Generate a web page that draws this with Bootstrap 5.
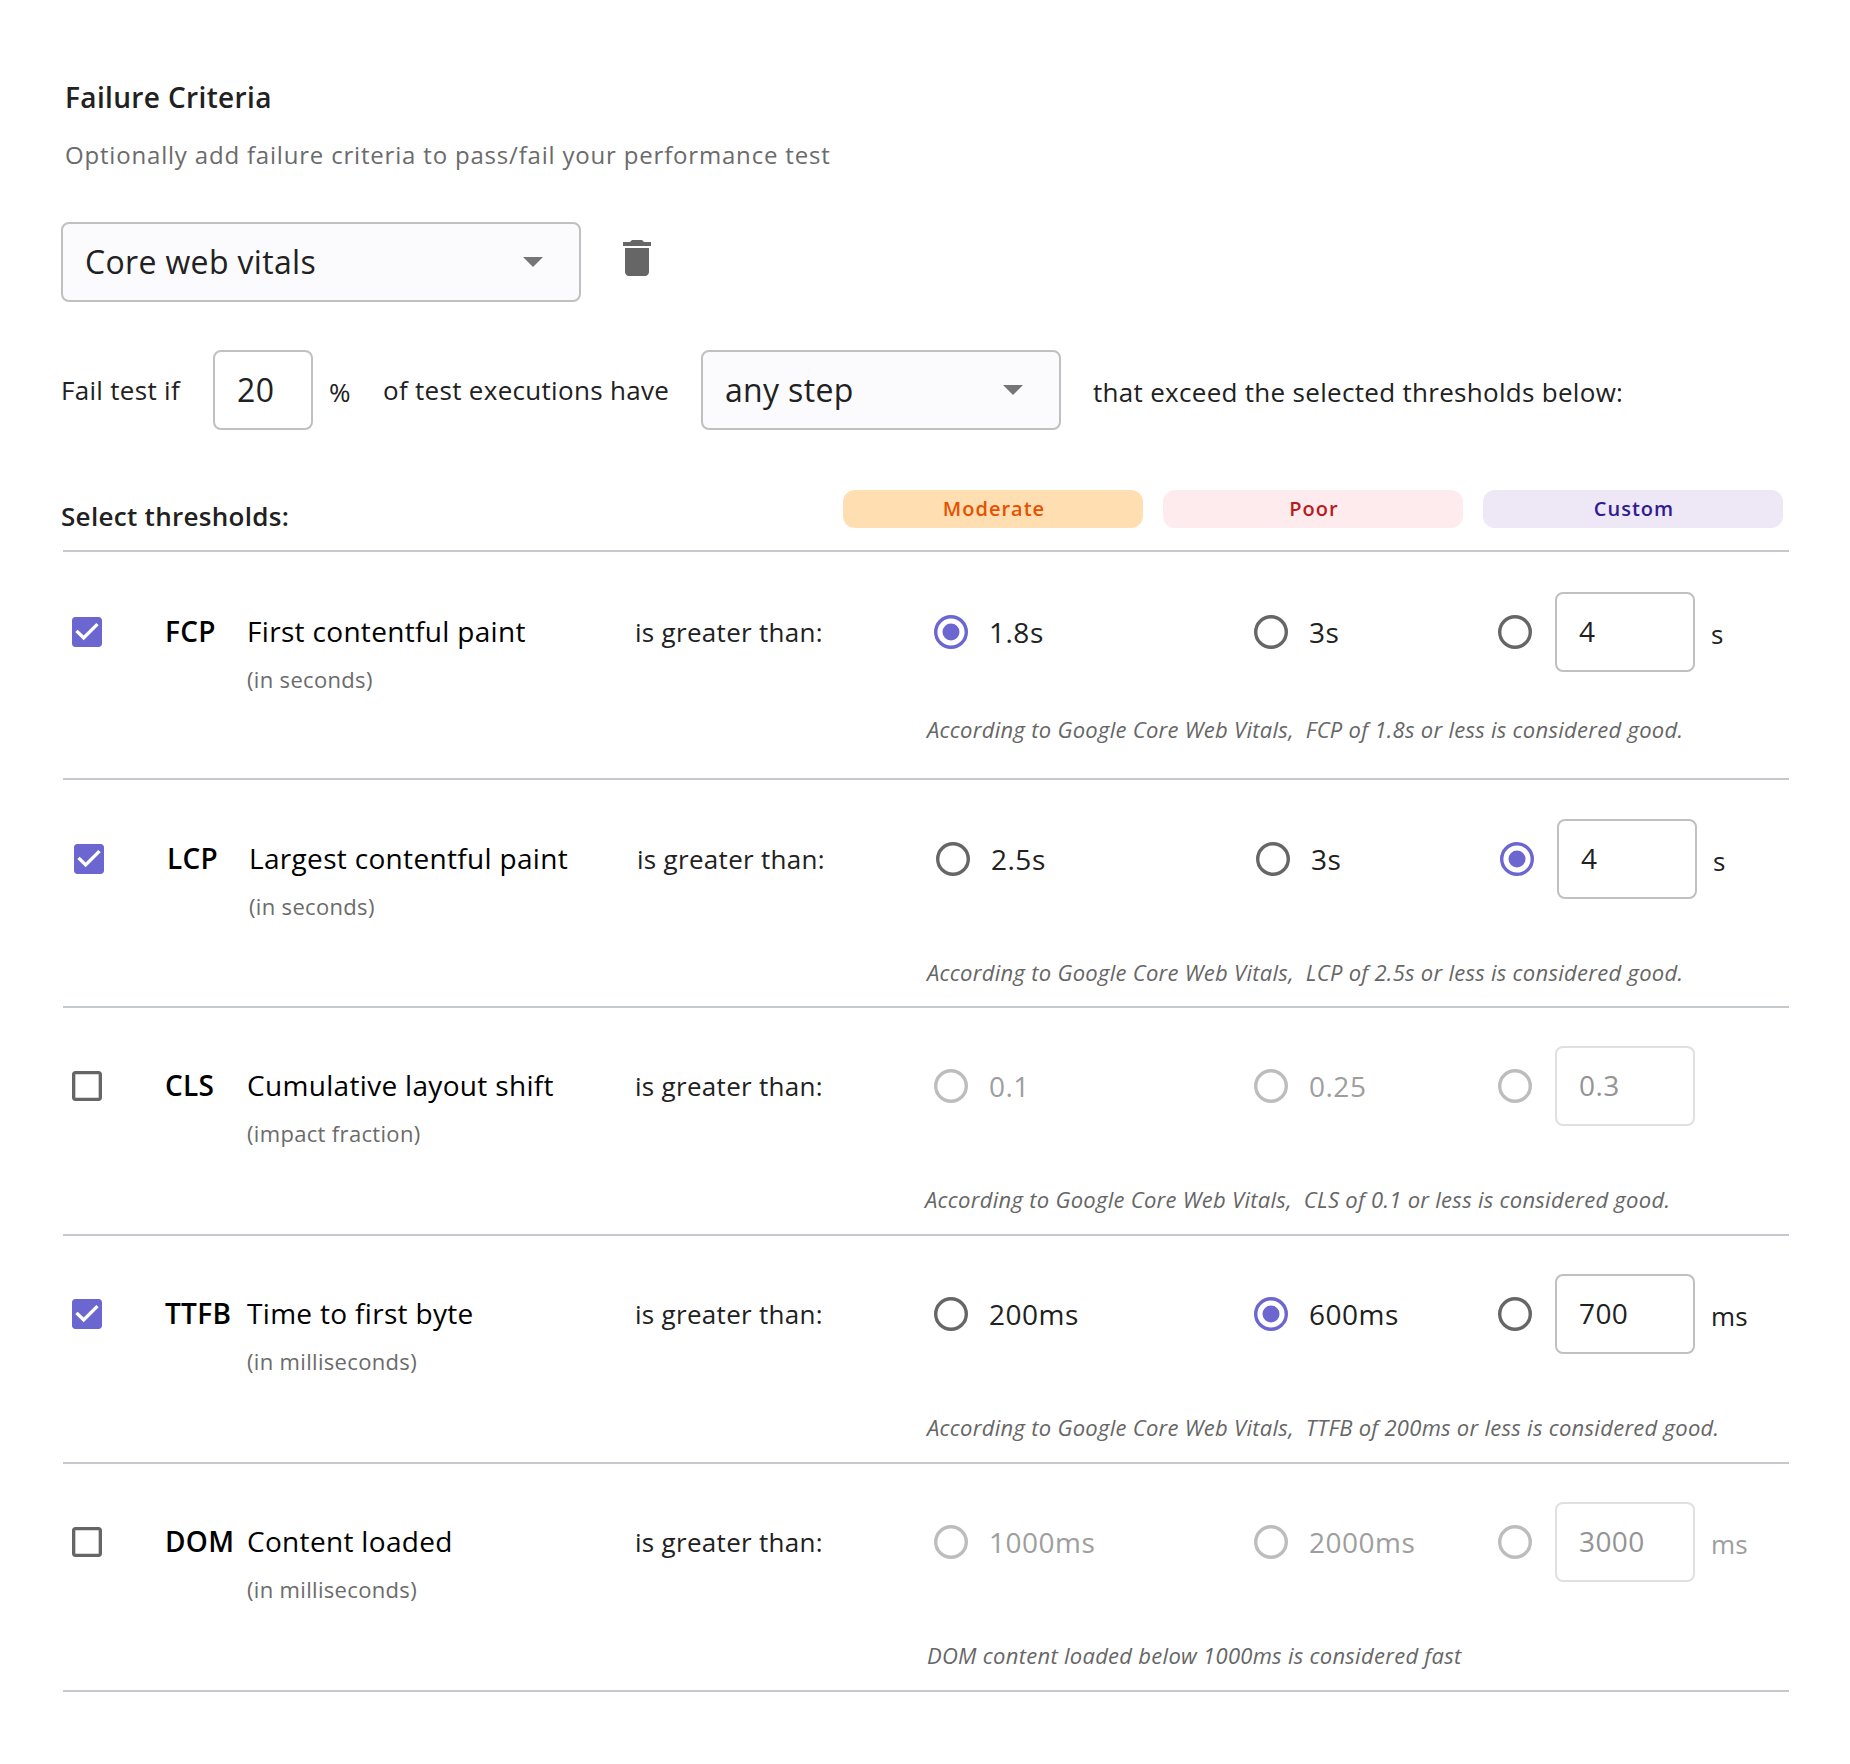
<!DOCTYPE html>
<html lang="en">
<head>
<meta charset="utf-8">
<meta name="viewport" content="width=device-width, initial-scale=1">
<title>Failure Criteria</title>
<link href="https://cdn.jsdelivr.net/npm/bootstrap@5.3.0/dist/css/bootstrap.min.css" rel="stylesheet">
<style>
  body { font-family: "Open Sans", sans-serif; font-size: 26px; line-height: 36px; letter-spacing: .3px; color: #212121; background: #fff; }
  .page { width: 1850px; height: 1764px; padding: 77px 61px 0; overflow: hidden; }
  .page-title { font-size: 28px; line-height: 40px; font-weight: 600; letter-spacing: .36px; padding-left: 4px; margin: 0; }
  .page-hint { font-size: 24px; line-height: 34px; letter-spacing: .81px; color: #6b6b6b; padding-left: 4px; margin: 21px 0 50px; }
  .picker, .field { height: 80px; border: 2px solid #c0c0c0; border-radius: 8px; font-size: 32px; letter-spacing: .34px; color: #212121; padding: 0 36px 0 22px; }
  .picker { background: #fbfbfd; }
  .picker-type { width: 520px; }
  .picker-step { width: 360px; }
  .field { background: #fff; }
  .field-pct { width: 100px; padding: 0 0 0 22px; }
  .trash { margin: -8px 0 0 42px; }
  .sentence { margin-top: 48px; height: 80px; }
  .sentence .w-fail { width: 152px; }
  .sentence .w-pct { width: 54px; margin-left: 16px; padding-top: 4px; }
  .sentence .w-exec { width: 318px; }
  .sentence .w-tail { margin-left: 32px; padding-top: 4px; }
  .heads { margin-top: 60px; height: 60px; }
  .heads-title { font-size: 26px; line-height: 36px; font-weight: 600; margin: 8px auto 0 0; }
  .pill-set { gap: 20px; margin-right: 6px; }
  .pill { width: 300px; height: 38px; line-height: 38px; border-radius: 12px; font-size: 20px; font-weight: 600; letter-spacing: 1px; text-align: center; padding-left: 2px; }
  .pill-moderate { background: #ffdfb2; color: #e65100; }
  .pill-poor { background: #feebee; color: #b71c1c; }
  .pill-custom { background: #ede7f6; color: #311b92; }
  .metrics { margin: 0 0 0 2px; width: 1726px; border-top: 2px solid #c5c8cd; }
  .metric { height: 228px; border-bottom: 2px solid #c5c8cd; padding: 38px 0 0 9px; }
  .metric.first { padding-top: 40px; }
  .metric.second { padding-top: 39px; padding-left: 11px; }
  .line { height: 80px; }
  .col-check { width: 93px; }
  .col-abbr { width: 82px; font-size: 28px; font-weight: 600; color: #000; padding-bottom: 2px; letter-spacing: .3px; white-space: nowrap; }
  .col-name { width: 388px; }
  .metric-name { font-size: 28px; line-height: 80px; height: 80px; margin-top: -1px; color: #000; letter-spacing: .32px; }
  .metric-unit { font-size: 22px; line-height: 30px; margin-top: -7px; color: #6b6b6b; letter-spacing: .33px; }
  .col-op { width: 299px; }
  .opt { color: #666; }
  .opt.on { color: #6c67d0; }
  .opt .val { font-size: 28px; letter-spacing: .5px; color: #212121; margin-left: 21px; }
  .opt-a { width: 320px; }
  .opt-b { width: 244px; }
  .opt-c { width: 57px; }
  .opt svg, .col-check svg { display: block; flex: none; }
  .col-check svg { color: #666; }
  .col-check.on svg { color: #6c67d0; }
  .limit { width: 140px; font-size: 28px; letter-spacing: .4px; line-height: 74px; padding: 0 0 0 22px; }
  .suffix { margin-left: 16px; padding-top: 4px; }
  .off .opt { color: #bdbdbd; }
  .off .opt .val, .off .suffix { color: #9e9e9e; }
  .off .limit { border-color: #e0e0e0; color: #949494; }
  .note { font-size: 22px; line-height: 30px; font-style: italic; letter-spacing: .28px; color: #666; white-space: pre; margin: 58px 0 0 855px; }
  .first .note { margin-top: 42px; }
  .second .note { margin-left: 853px; }
  .third .note { margin-left: 853px; }
</style>
<script src="https://cdn.jsdelivr.net/npm/bootstrap@5.3.0/dist/js/bootstrap.bundle.min.js"></script>
</head>
<body>
<svg class="d-none">
  <symbol id="box-on" viewBox="3 3 18 18"><path fill="currentColor" d="M19 3H5c-1.11 0-2 .9-2 2v14c0 1.1.89 2 2 2h14c1.11 0 2-.9 2-2V5c0-1.1-.89-2-2-2zm-9 14l-5-5 1.41-1.41L10 14.17l7.59-7.59L19 8l-9 9z"/></symbol>
  <symbol id="box-off" viewBox="3 3 18 18"><path fill="currentColor" d="M19 5v14H5V5h14m0-2H5c-1.1 0-2 .9-2 2v14c0 1.1.9 2 2 2h14c1.1 0 2-.9 2-2V5c0-1.1-.9-2-2-2z"/></symbol>
  <symbol id="dot-off" viewBox="0 0 20 20"><circle cx="10" cy="10" r="9" fill="none" stroke="currentColor" stroke-width="2"/></symbol>
  <symbol id="dot-on" viewBox="0 0 20 20"><circle cx="10" cy="10" r="9" fill="none" stroke="currentColor" stroke-width="2"/><circle cx="10" cy="10" r="5" fill="currentColor"/></symbol>
  <symbol id="caret" viewBox="0 0 20 10"><path fill="#757575" d="M0 0h20L10 10z"/></symbol>
</svg>

<main class="page">
  <h1 class="page-title">Failure Criteria</h1>
  <p class="page-hint">Optionally add failure criteria to pass/fail your performance test</p>

  <div class="d-flex align-items-center">
    <div class="picker picker-type d-flex align-items-center justify-content-between" role="button"><span>Core web vitals</span><svg width="20" height="10"><use href="#caret"/></svg></div>
    <svg class="trash" width="28" height="36" viewBox="0 0 14 18"><path fill="#666" d="M1 16c0 1.1.9 2 2 2h8c1.1 0 2-.9 2-2V4H1v12zM14 1h-3.500l-1-1h-5l-1 1H0v2h14V1z"/></svg>
  </div>

  <div class="sentence d-flex align-items-center">
    <span class="w-fail">Fail test if</span>
    <span class="field field-pct d-flex align-items-center">20</span>
    <span class="w-pct">%</span>
    <span class="w-exec">of test executions have</span>
    <div class="picker picker-step d-flex align-items-center justify-content-between" role="button"><span>any step</span><svg width="20" height="10"><use href="#caret"/></svg></div>
    <span class="w-tail">that exceed the selected thresholds below:</span>
  </div>

  <div class="heads d-flex align-items-start">
    <h2 class="heads-title">Select thresholds:</h2>
    <div class="d-flex pill-set">
      <div class="pill pill-moderate">Moderate</div>
      <div class="pill pill-poor">Poor</div>
      <div class="pill pill-custom">Custom</div>
    </div>
  </div>

  <section class="metrics">
    <article class="metric first">
      <div class="line d-flex align-items-center">
        <div class="col-check on"><svg width="30" height="30"><use href="#box-on"/></svg></div>
        <div class="col-abbr">FCP</div>
        <div class="col-name align-self-start"><div class="metric-name">First contentful paint</div><div class="metric-unit">(in seconds)</div></div>
        <div class="col-op">is greater than:</div>
        <div class="opt opt-a on d-flex align-items-center"><svg width="34" height="34"><use href="#dot-on"/></svg><span class="val">1.8s</span></div>
        <div class="opt opt-b d-flex align-items-center"><svg width="34" height="34"><use href="#dot-off"/></svg><span class="val">3s</span></div>
        <div class="opt opt-c"><svg width="34" height="34"><use href="#dot-off"/></svg></div>
        <div class="field limit">4</div><span class="suffix">s</span>
      </div>
      <p class="note">According to Google Core Web Vitals,  FCP of 1.8s or less is considered good.</p>
    </article>

    <article class="metric second">
      <div class="line d-flex align-items-center">
        <div class="col-check on"><svg width="30" height="30"><use href="#box-on"/></svg></div>
        <div class="col-abbr">LCP</div>
        <div class="col-name align-self-start"><div class="metric-name">Largest contentful paint</div><div class="metric-unit">(in seconds)</div></div>
        <div class="col-op">is greater than:</div>
        <div class="opt opt-a d-flex align-items-center"><svg width="34" height="34"><use href="#dot-off"/></svg><span class="val">2.5s</span></div>
        <div class="opt opt-b d-flex align-items-center"><svg width="34" height="34"><use href="#dot-off"/></svg><span class="val">3s</span></div>
        <div class="opt opt-c on"><svg width="34" height="34"><use href="#dot-on"/></svg></div>
        <div class="field limit">4</div><span class="suffix">s</span>
      </div>
      <p class="note">According to Google Core Web Vitals,  LCP of 2.5s or less is considered good.</p>
    </article>

    <article class="metric third off">
      <div class="line d-flex align-items-center">
        <div class="col-check"><svg width="30" height="30"><use href="#box-off"/></svg></div>
        <div class="col-abbr">CLS</div>
        <div class="col-name align-self-start"><div class="metric-name">Cumulative layout shift</div><div class="metric-unit">(impact fraction)</div></div>
        <div class="col-op">is greater than:</div>
        <div class="opt opt-a d-flex align-items-center"><svg width="34" height="34"><use href="#dot-off"/></svg><span class="val">0.1</span></div>
        <div class="opt opt-b d-flex align-items-center"><svg width="34" height="34"><use href="#dot-off"/></svg><span class="val">0.25</span></div>
        <div class="opt opt-c"><svg width="34" height="34"><use href="#dot-off"/></svg></div>
        <div class="field limit">0.3</div>
      </div>
      <p class="note">According to Google Core Web Vitals,  CLS of 0.1 or less is considered good.</p>
    </article>

    <article class="metric">
      <div class="line d-flex align-items-center">
        <div class="col-check on"><svg width="30" height="30"><use href="#box-on"/></svg></div>
        <div class="col-abbr">TTFB</div>
        <div class="col-name align-self-start"><div class="metric-name">Time to first byte</div><div class="metric-unit">(in milliseconds)</div></div>
        <div class="col-op">is greater than:</div>
        <div class="opt opt-a d-flex align-items-center"><svg width="34" height="34"><use href="#dot-off"/></svg><span class="val">200ms</span></div>
        <div class="opt opt-b on d-flex align-items-center"><svg width="34" height="34"><use href="#dot-on"/></svg><span class="val">600ms</span></div>
        <div class="opt opt-c"><svg width="34" height="34"><use href="#dot-off"/></svg></div>
        <div class="field limit">700</div><span class="suffix">ms</span>
      </div>
      <p class="note">According to Google Core Web Vitals,  TTFB of 200ms or less is considered good.</p>
    </article>

    <article class="metric off">
      <div class="line d-flex align-items-center">
        <div class="col-check"><svg width="30" height="30"><use href="#box-off"/></svg></div>
        <div class="col-abbr">DOM</div>
        <div class="col-name align-self-start"><div class="metric-name">Content loaded</div><div class="metric-unit">(in milliseconds)</div></div>
        <div class="col-op">is greater than:</div>
        <div class="opt opt-a d-flex align-items-center"><svg width="34" height="34"><use href="#dot-off"/></svg><span class="val">1000ms</span></div>
        <div class="opt opt-b d-flex align-items-center"><svg width="34" height="34"><use href="#dot-off"/></svg><span class="val">2000ms</span></div>
        <div class="opt opt-c"><svg width="34" height="34"><use href="#dot-off"/></svg></div>
        <div class="field limit">3000</div><span class="suffix">ms</span>
      </div>
      <p class="note">DOM content loaded below 1000ms is considered fast</p>
    </article>
  </section>
</main>
</body>
</html>
